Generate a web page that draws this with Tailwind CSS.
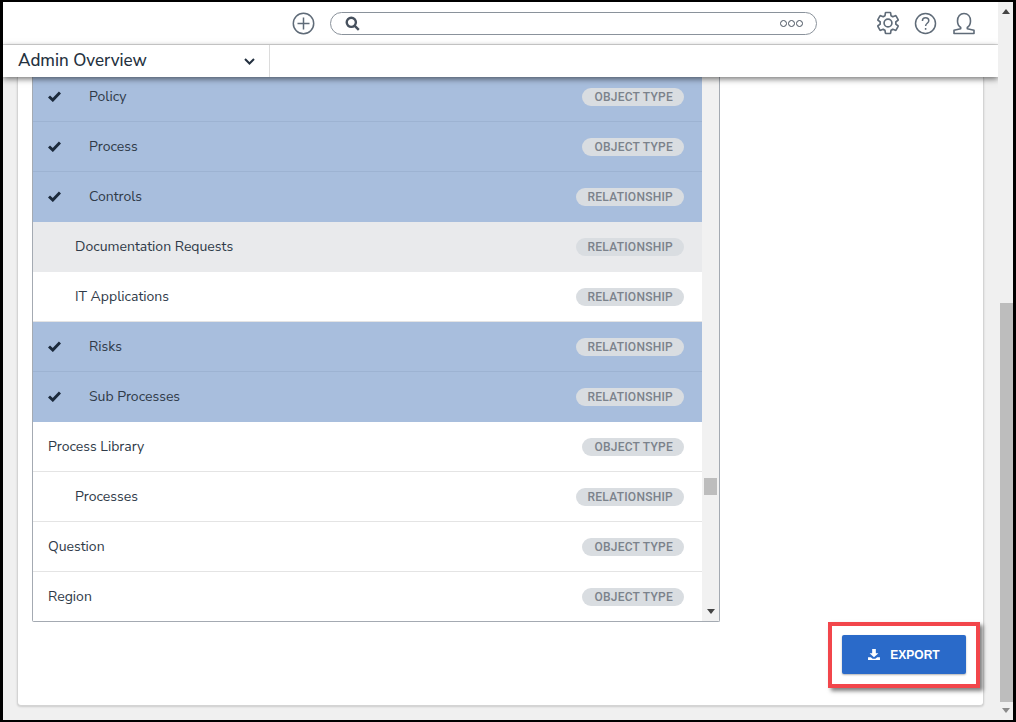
<!DOCTYPE html>
<html lang="en">
	<head>
		<meta charset="UTF-8" />
		<title>Admin Overview</title>
		<script src="https://cdn.jsdelivr.net/npm/@tailwindcss/browser@4"></script>
	</head>
	<body class="bg-black">
		<div class="w-[1016px] h-[722px] overflow-hidden pt-[2px] pl-[3px] pr-[3px] pb-[2px] font-['Nunito_Sans','Lato',sans-serif] text-[#2f3a48]">
			<div class="flex h-full bg-[#f0f0f0]">
				<!-- page -->
				<div class="relative flex flex-col w-[995px] h-full overflow-hidden">
					<!-- top bar -->
					<header class="relative z-10 shrink-0 flex items-center h-[43px] bg-white border-b border-[#dcdcdc] pl-[289px]">
						<svg class="w-[23px] h-[23px] text-[#5f6b78]" viewBox="0 0 23 23" fill="none" stroke="currentColor" stroke-width="1.5">
							<circle cx="11.5" cy="11.5" r="10.2" />
							<path d="M11.5 5.5v12M5.5 11.5h12" />
						</svg>
						<div class="flex items-center justify-between ml-[15px] w-[487px] h-[23px] rounded-full border border-[#8a929b] pl-[14px] pr-[13px]">
							<svg class="w-[15px] h-[15px] text-[#47515e]" viewBox="0 0 15 15" fill="none" stroke="currentColor" stroke-width="2.4">
								<circle cx="6.3" cy="6.3" r="4.6" />
								<path d="M9.8 9.8l4 4" />
							</svg>
							<div class="flex gap-[1px]">
								<span class="w-[7px] h-[7px] rounded-full border border-[#47515e]"></span>
								<span class="w-[7px] h-[7px] rounded-full border border-[#47515e]"></span>
								<span class="w-[7px] h-[7px] rounded-full border border-[#47515e]"></span>
							</div>
						</div>
						<svg class="ml-[59px] w-[24px] h-[24px] text-[#5f6b78]" viewBox="1 1 22 22" fill="none" stroke="currentColor" stroke-width="1.5" stroke-linejoin="round">
							<path d="M19.14 12.94c.04-.3.06-.61.06-.94 0-.32-.02-.64-.07-.94l2.03-1.58c.18-.14.23-.41.12-.61l-1.92-3.32c-.12-.22-.37-.29-.59-.22l-2.39.96c-.5-.38-1.03-.7-1.62-.94l-.36-2.54c-.04-.24-.24-.41-.48-.41h-3.84c-.24 0-.43.17-.47.41l-.36 2.54c-.59.24-1.13.57-1.62.94l-2.39-.96c-.22-.08-.47 0-.59.22L2.74 8.87c-.12.21-.08.47.12.61l2.03 1.58c-.05.3-.09.63-.09.94s.02.64.07.94l-2.03 1.58c-.18.14-.23.41-.12.61l1.92 3.32c.12.22.37.29.59.22l2.39-.96c.5.38 1.03.7 1.62.94l.36 2.54c.05.24.24.41.48.41h3.84c.24 0 .44-.17.47-.41l.36-2.54c.59-.24 1.13-.56 1.62-.94l2.39.96c.22.08.47 0 .59-.22l1.92-3.32c.12-.22.07-.47-.12-.61l-2.01-1.58z" />
							<circle cx="12" cy="12" r="3.6" />
						</svg>
						<svg class="ml-[14px] w-[23px] h-[23px] text-[#5f6b78]" viewBox="0 0 23 23" fill="none" stroke="currentColor" stroke-width="1.5">
							<circle cx="11.5" cy="11.5" r="10" />
							<path d="M8.4 9c0-2 1.4-3.2 3.2-3.2S14.800 7 14.800 8.700c0 2.500-3.200 2.700-3.200 5.300" />
							<path d="M11.600 16v1.800" />
						</svg>
						<svg class="ml-[15px] w-[24px] h-[23px] text-[#5f6b78]" viewBox="0 0 24 23" fill="none" stroke="currentColor" stroke-width="1.6" stroke-linejoin="round">
							<path d="M8.700 15.500c-2-1.400-3.200-3.700-3.200-6.500C5.500 4.500 8.200 1.500 12 1.500S18.500 4.500 18.500 9c0 2.800-1.200 5.100-3.200 6.500v1.200l6.700 1.500v3.300H2v-3.300l6.700-1.500z" />
						</svg>
					</header>
					<!-- dashboard bar -->
					<div class="relative z-10 shrink-0 flex h-[32px] bg-white shadow-[0_2px_6px_rgba(0,0,0,0.55)]">
						<div class="flex items-center justify-between w-[267px] h-full border-r border-[#dcdcdc] pl-[15px] pr-[14px]">
							<span class="text-[17px] font-medium text-[#243140]">Admin Overview</span>
							<svg class="w-[11px] h-[7px] text-[#243140]" viewBox="0 0 11 7" fill="none" stroke="currentColor" stroke-width="2">
								<path d="M1 1l4.500 4.500L10 1" />
							</svg>
						</div>
					</div>
					<!-- card -->
					<div class="flex-1 overflow-hidden pl-[14px] pr-[14px] pb-[14px]">
						<div class="relative h-full bg-white rounded-b-[4px] border-l border-r border-b border-[#d4d4d4] shadow-[0_1px_2px_rgba(0,0,0,0.15)] pl-[14px]">
							<div class="flex w-[688px] h-[545px] border-l border-r border-b border-[#a4aab2] rounded-b-[2px] overflow-hidden">
								<div class="flex-1 -mt-[5px] text-[14px]">
									<div class="flex items-center justify-between h-[50px] bg-[#a8bedd] border-b border-[#9db3d2] pr-[18px]">
										<div class="flex items-center">
											<svg class="ml-[15px] w-[13px] h-[11px] text-[#1b2a3c]" viewBox="0 0 13 11" fill="none" stroke="currentColor" stroke-width="3"><path d="M1 5.500L4.800 9 12 1.500" /></svg>
											<span class="ml-[28px]">Policy</span>
										</div>
										<span class="rounded-full bg-[#d9dde1] pl-[12px] pr-[11px] h-[18px] leading-[18px] font-['Roboto',sans-serif] text-[12px] tracking-[0.25px] font-medium text-[#7b828b]">OBJECT TYPE</span>
									</div>
									<div class="flex items-center justify-between h-[50px] bg-[#a8bedd] border-b border-[#9db3d2] pr-[18px]">
										<div class="flex items-center">
											<svg class="ml-[15px] w-[13px] h-[11px] text-[#1b2a3c]" viewBox="0 0 13 11" fill="none" stroke="currentColor" stroke-width="3"><path d="M1 5.500L4.800 9 12 1.500" /></svg>
											<span class="ml-[28px]">Process</span>
										</div>
										<span class="rounded-full bg-[#d9dde1] pl-[12px] pr-[11px] h-[18px] leading-[18px] font-['Roboto',sans-serif] text-[12px] tracking-[0.25px] font-medium text-[#7b828b]">OBJECT TYPE</span>
									</div>
									<div class="flex items-center justify-between h-[50px] bg-[#a8bedd] border-b border-[#a8bedd] pr-[18px]">
										<div class="flex items-center">
											<svg class="ml-[15px] w-[13px] h-[11px] text-[#1b2a3c]" viewBox="0 0 13 11" fill="none" stroke="currentColor" stroke-width="3"><path d="M1 5.500L4.800 9 12 1.500" /></svg>
											<span class="ml-[28px]">Controls</span>
										</div>
										<span class="rounded-full bg-[#d9dde1] pl-[12px] pr-[11px] h-[18px] leading-[18px] font-['Roboto',sans-serif] text-[12px] tracking-[0.25px] font-medium text-[#7b828b]">RELATIONSHIP</span>
									</div>
									<div class="flex items-center justify-between h-[50px] bg-[#e9eaec] border-b border-[#e9eaec] pl-[42px] pr-[18px]">
										<span>Documentation Requests</span>
										<span class="rounded-full bg-[#d9dde1] pl-[12px] pr-[11px] h-[18px] leading-[18px] font-['Roboto',sans-serif] text-[12px] tracking-[0.25px] font-medium text-[#7b828b]">RELATIONSHIP</span>
									</div>
									<div class="flex items-center justify-between h-[50px] bg-white border-b border-[#e4e4e4] pl-[42px] pr-[18px]">
										<span>IT Applications</span>
										<span class="rounded-full bg-[#d9dde1] pl-[12px] pr-[11px] h-[18px] leading-[18px] font-['Roboto',sans-serif] text-[12px] tracking-[0.25px] font-medium text-[#7b828b]">RELATIONSHIP</span>
									</div>
									<div class="flex items-center justify-between h-[50px] bg-[#a8bedd] border-b border-[#9db3d2] pr-[18px]">
										<div class="flex items-center">
											<svg class="ml-[15px] w-[13px] h-[11px] text-[#1b2a3c]" viewBox="0 0 13 11" fill="none" stroke="currentColor" stroke-width="3"><path d="M1 5.500L4.800 9 12 1.500" /></svg>
											<span class="ml-[28px]">Risks</span>
										</div>
										<span class="rounded-full bg-[#d9dde1] pl-[12px] pr-[11px] h-[18px] leading-[18px] font-['Roboto',sans-serif] text-[12px] tracking-[0.25px] font-medium text-[#7b828b]">RELATIONSHIP</span>
									</div>
									<div class="flex items-center justify-between h-[50px] bg-[#a8bedd] border-b border-[#a8bedd] pr-[18px]">
										<div class="flex items-center">
											<svg class="ml-[15px] w-[13px] h-[11px] text-[#1b2a3c]" viewBox="0 0 13 11" fill="none" stroke="currentColor" stroke-width="3"><path d="M1 5.500L4.800 9 12 1.500" /></svg>
											<span class="ml-[28px]">Sub Processes</span>
										</div>
										<span class="rounded-full bg-[#d9dde1] pl-[12px] pr-[11px] h-[18px] leading-[18px] font-['Roboto',sans-serif] text-[12px] tracking-[0.25px] font-medium text-[#7b828b]">RELATIONSHIP</span>
									</div>
									<div class="flex items-center justify-between h-[50px] bg-white border-b border-[#e4e4e4] pl-[15px] pr-[18px]">
										<span>Process Library</span>
										<span class="rounded-full bg-[#d9dde1] pl-[12px] pr-[11px] h-[18px] leading-[18px] font-['Roboto',sans-serif] text-[12px] tracking-[0.25px] font-medium text-[#7b828b]">OBJECT TYPE</span>
									</div>
									<div class="flex items-center justify-between h-[50px] bg-white border-b border-[#e4e4e4] pl-[42px] pr-[18px]">
										<span>Processes</span>
										<span class="rounded-full bg-[#d9dde1] pl-[12px] pr-[11px] h-[18px] leading-[18px] font-['Roboto',sans-serif] text-[12px] tracking-[0.25px] font-medium text-[#7b828b]">RELATIONSHIP</span>
									</div>
									<div class="flex items-center justify-between h-[50px] bg-white border-b border-[#e4e4e4] pl-[15px] pr-[18px]">
										<span>Question</span>
										<span class="rounded-full bg-[#d9dde1] pl-[12px] pr-[11px] h-[18px] leading-[18px] font-['Roboto',sans-serif] text-[12px] tracking-[0.25px] font-medium text-[#7b828b]">OBJECT TYPE</span>
									</div>
									<div class="flex items-center justify-between h-[50px] bg-white border-b border-white pl-[15px] pr-[18px]">
										<span>Region</span>
										<span class="rounded-full bg-[#d9dde1] pl-[12px] pr-[11px] h-[18px] leading-[18px] font-['Roboto',sans-serif] text-[12px] tracking-[0.25px] font-medium text-[#7b828b]">OBJECT TYPE</span>
									</div>
								</div>
								<!-- list scrollbar -->
								<div class="relative shrink-0 w-[17px] bg-[#f1f1f1]">
									<div class="absolute left-[2px] top-[401px] w-[13px] h-[17px] bg-[#bdbdbd]"></div>
									<div class="absolute left-[5px] bottom-[7px] border-x-[4px] border-x-transparent border-t-[5px] border-t-[#444]"></div>
								</div>
							</div>
							<!-- export -->
							<div class="flex justify-end pr-[17px] pt-[13px]">
								<button class="flex items-center justify-center w-[124px] h-[39px] rounded-[2px] bg-[#2a6ac9] text-white font-['Liberation_Sans',sans-serif] text-[12px] font-bold shadow-[0_1px_2px_rgba(0,0,0,0.3)]">
									<svg class="mr-[10px] w-[12px] h-[11px]" viewBox="0 0 13 12" fill="currentColor"><path d="M4.500 0h4v4.500h2.800L6.500 9 1.700 4.500h2.800zM0 9h3l2 1.500h3L10 9h3v3H0z" /></svg>
									EXPORT
								</button>
							</div>
							<!-- callout -->
							<div class="absolute right-[3px] bottom-[17px] w-[152px] h-[66px] border-[4px] border-[#f2464b] shadow-[3px_3px_4px_rgba(0,0,0,0.5)]"></div>
						</div>
					</div>
				</div>
				<!-- page scrollbar -->
				<div class="relative shrink-0 w-[15px] ml-auto bg-[#f0f0f0]">
					<div class="absolute left-[4px] top-[7px] border-x-[4px] border-x-transparent border-b-[5px] border-b-[#444]"></div>
					<div class="absolute left-[2px] top-[301px] w-[13px] h-[399px] bg-[#bdbdbd]"></div>
					<div class="absolute left-[4px] bottom-[7px] border-x-[4px] border-x-transparent border-t-[5px] border-t-[#8a8a8a]"></div>
				</div>
			</div>
		</div>
	</body>
</html>
